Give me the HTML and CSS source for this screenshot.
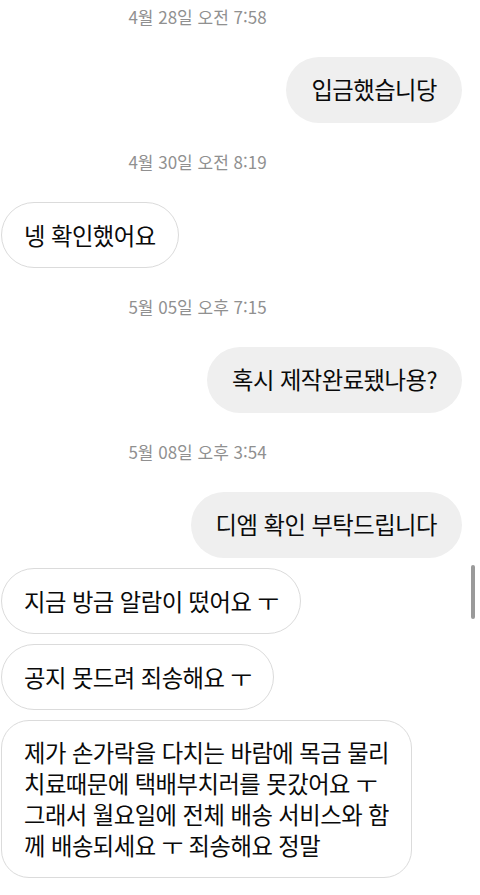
FILE: index.html
```html
<!DOCTYPE html>
<html lang="ko">
<head>
    <meta charset="UTF-8">
    <meta name="viewport" content="width=device-width, initial-scale=1.0">
    <title>메시지</title>
    <link rel="stylesheet" href="styles.css">
</head>
<body>
    <div class="chat">
        <div class="time">4월 28일 오전 7:58</div>
        <div class="row sent">
            <div class="bubble">입금했습니당</div>
        </div>

        <div class="time">4월 30일 오전 8:19</div>
        <div class="row received">
            <div class="bubble">넹 확인했어요</div>
        </div>

        <div class="time">5월 05일 오후 7:15</div>
        <div class="row sent">
            <div class="bubble">혹시 제작완료됐나용?</div>
        </div>

        <div class="time">5월 08일 오후 3:54</div>
        <div class="row sent">
            <div class="bubble">디엠 확인 부탁드립니다</div>
        </div>
        <div class="row received">
            <div class="bubble">지금 방금 알람이 떴어요 ㅜ</div>
        </div>
        <div class="row received">
            <div class="bubble">공지 못드려 죄송해요 ㅜ</div>
        </div>
        <div class="row received">
            <div class="bubble long">제가 손가락을 다치는 바람에 목금 물리<br>치료때문에 택배부치러를 못갔어요 ㅜ<br>그래서 월요일에 전체 배송 서비스와 함<br>께 배송되세요 ㅜ 죄송해요 정말</div>
        </div>
    </div>
    <div class="scrollbar"></div>
</body>
</html>
```

FILE: styles.css
```css
* {
    box-sizing: border-box;
    padding: 0;
    margin: 0;
}

body {
    font-family: "Noto Sans CJK KR", "Noto Sans", sans-serif;
    background-color: #ffffff;
    color: #0a0a0a;
    width: 480px;
    height: 895px;
    overflow: hidden;
    position: relative;
}

.chat {
    display: flex;
    flex-direction: column;
    padding: 7px 18px 0 1px;
}

.time {
    width: 393px;
    height: 20px;
    line-height: 20px;
    margin-bottom: 30px;
    text-align: center;
    font-size: 17px;
    color: #909090;
}

.row + .time {
    margin-top: 19px;
}

.row {
    display: flex;
    margin-bottom: 10px;
}

.sent {
    justify-content: flex-end;
}

.received {
    justify-content: flex-start;
}

.bubble {
    height: 66px;
    line-height: 64px;
    padding: 0 25px;
    border-radius: 33px;
    font-size: 23.3px;
    letter-spacing: -0.5px;
    white-space: nowrap;
}

.sent .bubble {
    background-color: #efefef;
}

.received .bubble {
    background-color: #ffffff;
    border: 1px solid #dbdbdb;
    padding: 0 22px;
}

.bubble.long {
    height: auto;
    line-height: 31px;
    padding: 16px 22px;
    border-radius: 28px;
}

.scrollbar {
    position: absolute;
    left: 471px;
    top: 565px;
    width: 4px;
    height: 54px;
    border-radius: 2px;
    background-color: #9a9a9a;
}
```
